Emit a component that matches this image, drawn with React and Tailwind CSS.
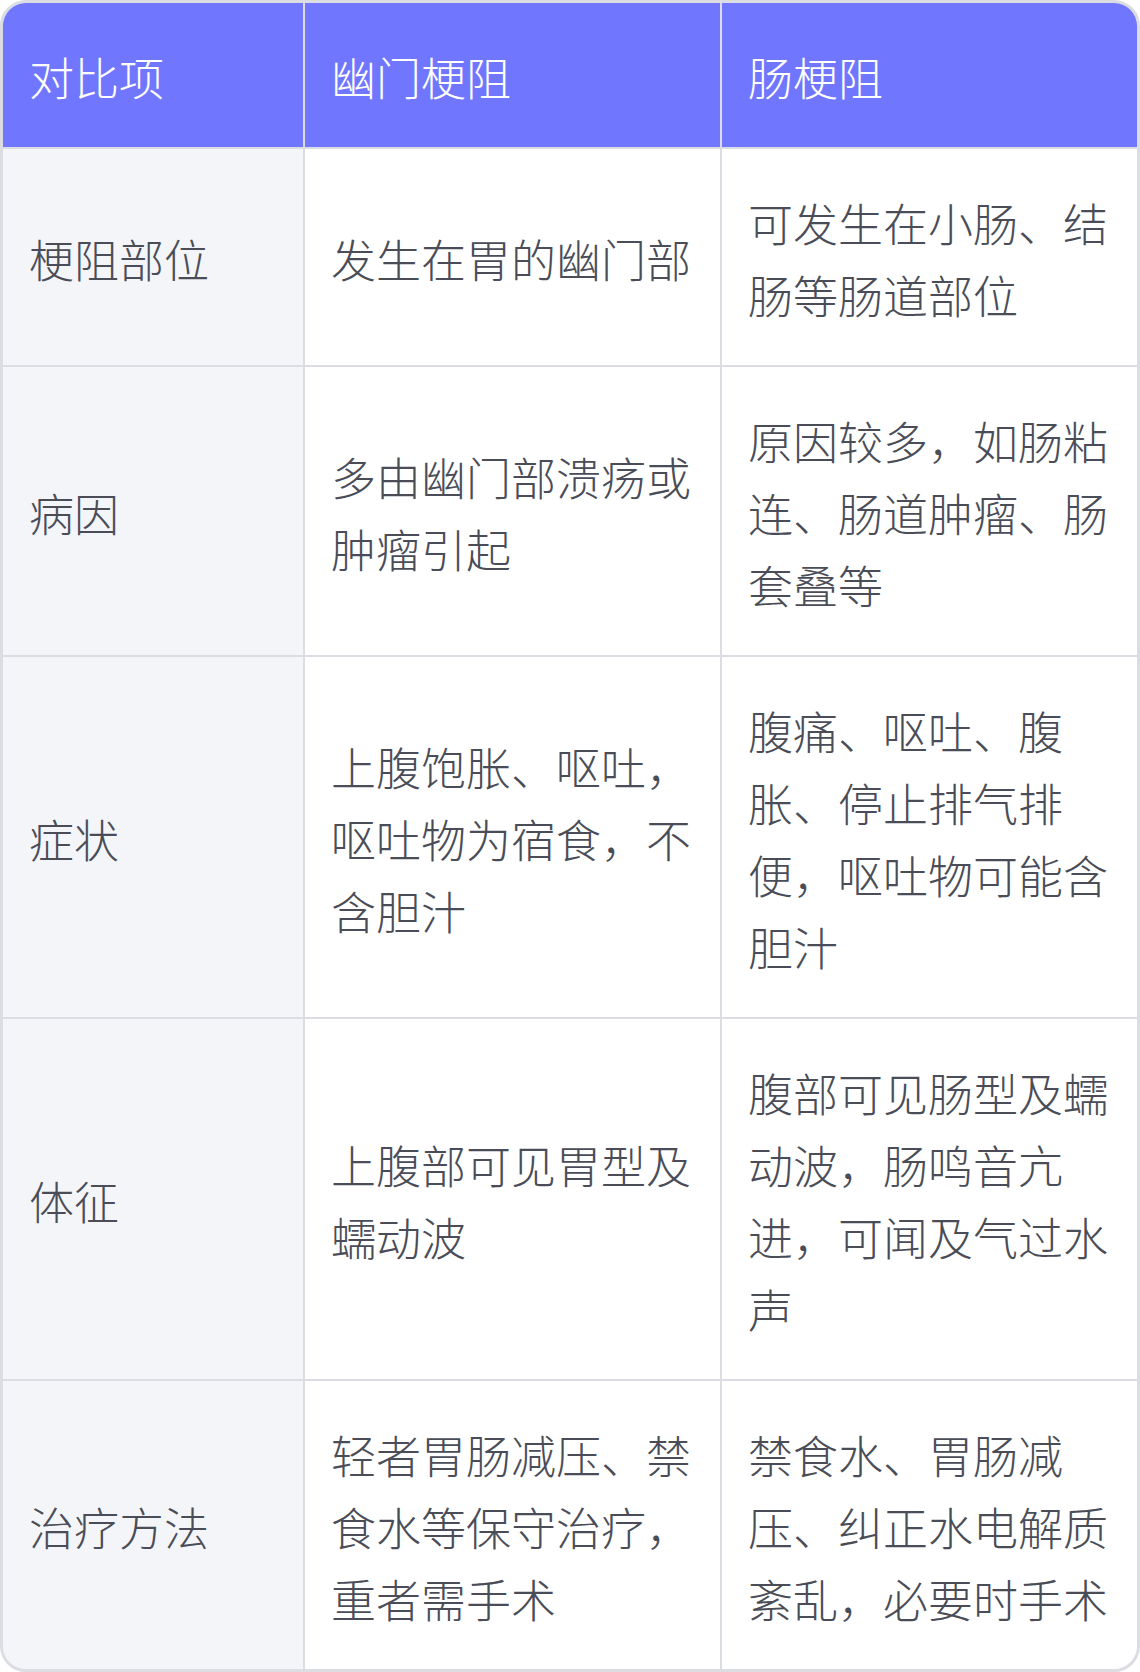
const ROWS = [
    { item: '梗阻部位', pylorus: '发生在胃的幽门部', bowel: '可发生在小肠、结肠等肠道部位' },
    { item: '病因', pylorus: '多由幽门部溃疡或肿瘤引起', bowel: '原因较多，如肠粘连、肠道肿瘤、肠套叠等' },
    { item: '症状', pylorus: '上腹饱胀、呕吐，呕吐物为宿食，不含胆汁', bowel: '腹痛、呕吐、腹胀、停止排气排便，呕吐物可能含胆汁' },
    { item: '体征', pylorus: '上腹部可见胃型及蠕动波', bowel: '腹部可见肠型及蠕动波，肠鸣音亢进，可闻及气过水声' },
    { item: '治疗方法', pylorus: '轻者胃肠减压、禁食水等保守治疗，重者需手术', bowel: '禁食水、胃肠减压、纠正水电解质紊乱，必要时手术' },
];

const HEADERS = ['对比项', '幽门梗阻', '肠梗阻'];

const cell = 'flex items-center px-[26px] pt-[38px] pb-[34px] text-[45px] leading-[72px] font-light';

export default function App() {
    return (
        <div
            className="w-[1140px] bg-white"
            style={{ fontFamily: '"Noto Sans CJK SC", "Noto Sans", sans-serif' }}
        >
            <div className="border-[3px] border-[#dcdde2] rounded-[26px] overflow-hidden">
                <div className="grid grid-cols-[300px_415px_415px] gap-[2px] bg-[#dcdde2]">
                    {/* Header */}
                    {HEADERS.map((h) => (
                        <div key={h} className={`${cell} bg-[#7176ff] text-white`}>
                            {h}
                        </div>
                    ))}

                    {/* Body */}
                    {ROWS.map((r) => (
                        <div key={r.item} className="contents">
                            <div className={`${cell} bg-[#f4f5f9] text-[#4a4d57]`}>{r.item}</div>
                            <div className={`${cell} bg-white text-[#4a4d57]`}>{r.pylorus}</div>
                            <div className={`${cell} bg-white text-[#4a4d57]`}>{r.bowel}</div>
                        </div>
                    ))}
                </div>
            </div>
        </div>
    );
}
